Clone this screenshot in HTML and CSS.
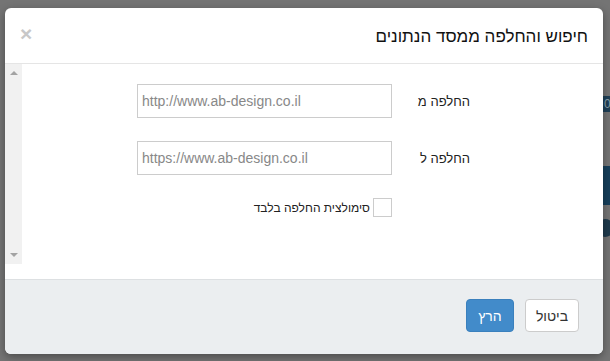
FILE: index.html
```html
<!DOCTYPE html>
<html lang="he" dir="rtl">
<head>
<meta charset="utf-8">
<link rel="stylesheet" href="styles.css">
</head>
<body>
<div class="backdrop">
  <span class="bg-badge">0</span>
  <span class="bg-block"></span>
  <span class="bg-dot"></span>
</div>
<div class="modal">
  <div class="modal-header">
    <h4 class="modal-title">חיפוש והחלפה ממסד הנתונים</h4>
    <span class="close">×</span>
  </div>
  <div class="modal-body">
    <div class="scroller">
      <div class="content">
        <div class="form-row">
          <label class="form-label">החלפה מ</label>
          <input class="form-input" type="text" placeholder="http://www.ab-design.co.il">
        </div>
        <div class="form-row">
          <label class="form-label">החלפה ל</label>
          <input class="form-input" type="text" placeholder="https://www.ab-design.co.il">
        </div>
        <div class="check-row">
          <span class="checkbox"></span>
          <span class="check-label">סימולצית החלפה בלבד</span>
        </div>
      </div>
      <div class="scrollbar">
        <span class="arrow-up"></span>
        <span class="arrow-down"></span>
      </div>
    </div>
  </div>
  <div class="modal-footer">
    <button class="btn btn-default">ביטול</button>
    <button class="btn btn-primary">הרץ</button>
  </div>
</div>
</body>
</html>
```
FILE: styles.css
```css
html, body {
  margin: 0;
  padding: 0;
}
body {
  background: #747474;
  width: 610px;
  height: 361px;
  overflow: hidden;
  font-family: "Liberation Sans", Arial, sans-serif;
  position: relative;
  direction: rtl;
}
.backdrop {
  position: absolute;
  inset: 0;
  z-index: 0;
}
.bg-badge {
  position: absolute;
  left: 602px;
  top: 96px;
  width: 12px;
  height: 16px;
  background: #1f4057;
  color: #8aa0ad;
  font-size: 12px;
  line-height: 16px;
  direction: ltr;
  padding-left: 2px;
}
.bg-block {
  position: absolute;
  left: 602px;
  top: 166px;
  width: 10px;
  height: 39px;
  background: #163f5a;
}
.bg-dot {
  position: absolute;
  left: 596px;
  top: 219px;
  width: 18px;
  height: 18px;
  border-radius: 50%;
  background: #1e3a4c;
}
.modal {
  position: relative;
  z-index: 1;
  margin: 8px 7px 0 5px;
  width: 598px;
  height: 346px;
  background: #fff;
  border-radius: 6px;
  overflow: hidden;
  display: flex;
  flex-direction: column;
  box-shadow: 0 3px 9px rgba(0,0,0,0.35);
}
.modal-header {
  height: 56px;
  border-bottom: 1px solid #e5e5e5;
  display: flex;
  align-items: center;
  justify-content: space-between;
  padding: 0 15px;
  box-sizing: border-box;
}
.modal-title {
  margin: 0;
  font-size: 17px;
  font-weight: normal;
  color: #111;
  padding-top: 2px;
}
.close {
  font-size: 21px;
  font-weight: bold;
  color: #c8c8c8;
  line-height: 1;
  margin-top: -4px;
}
.modal-body {
  padding-bottom: 15px;
}
.scroller {
  height: 200px;
  display: flex;
}
.content {
  flex: 1;
  padding-top: 20px;
  padding-right: 133px;
}
.scrollbar {
  width: 17px;
  background: #f1f1f1;
  display: flex;
  flex-direction: column;
  justify-content: space-between;
  align-items: center;
  padding: 7px 0 7px;
  box-sizing: border-box;
}
.arrow-up {
  width: 0;
  height: 0;
  border-left: 4px solid transparent;
  border-right: 4px solid transparent;
  border-bottom: 4px solid #a3a3a3;
}
.arrow-down {
  width: 0;
  height: 0;
  border-left: 4px solid transparent;
  border-right: 4px solid transparent;
  border-top: 4px solid #a3a3a3;
}
.form-row {
  display: flex;
  align-items: center;
  margin-bottom: 23px;
}
.form-label {
  width: 78px;
  font-size: 13px;
  color: #222;
  text-align: right;
}
.form-input {
  width: 255px;
  height: 34px;
  box-sizing: border-box;
  border: 1px solid #ccc;
  padding: 6px 4px;
  font-family: "Liberation Sans", Arial, sans-serif;
  font-size: 14px;
  direction: ltr;
  text-align: left;
  color: #555;
  outline: none;
}
.form-input::placeholder {
  color: #888;
}
.check-row {
  display: flex;
  align-items: center;
  margin-top: 12px;
  margin-right: 78px;
  gap: 3px;
}
.checkbox {
  width: 17px;
  height: 17px;
  border: 1px solid #ccc;
  background: #fff;
}
.check-label {
  font-size: 12px;
  color: #222;
}
.modal-footer {
  flex: 1;
  background: #ebeef0;
  border-top: 1px solid #dde0e2;
  display: flex;
  align-items: flex-start;
  padding: 19px 24px 0;
  gap: 11px;
}
.btn {
  height: 33px;
  padding: 0;
  font-family: "Liberation Sans", Arial, sans-serif;
  font-size: 14px;
  border-radius: 4px;
  border: 1px solid #ccc;
  cursor: pointer;
}
.btn-default {
  background: #fff;
  color: #333;
  width: 54px;
}
.btn-primary {
  background: #428bca;
  border-color: #3a80bd;
  color: #fff;
  width: 48px;
}
```
